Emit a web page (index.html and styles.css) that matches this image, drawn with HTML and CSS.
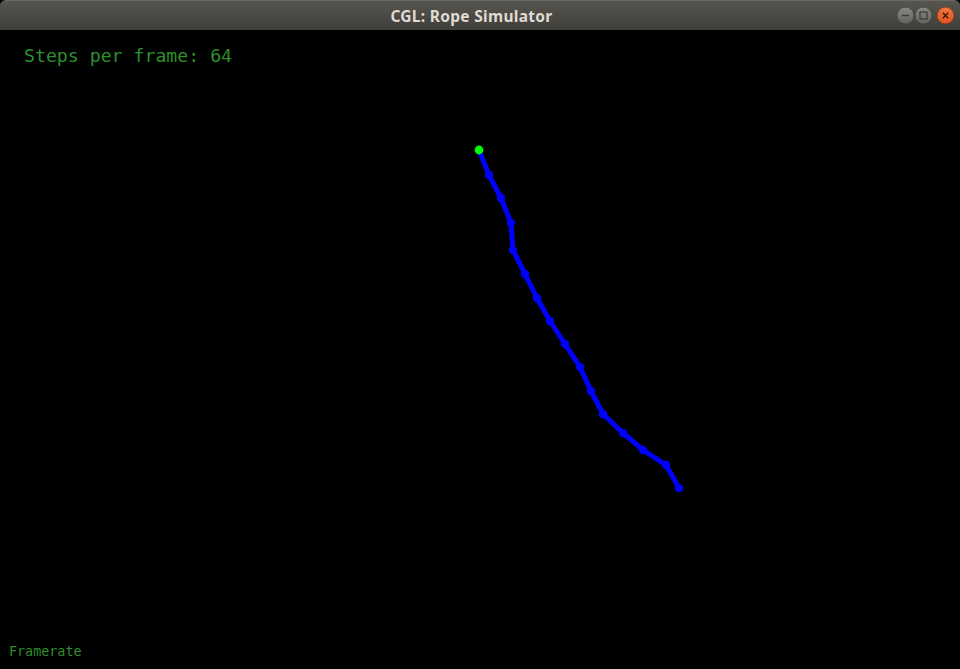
FILE: index.html
```html
<!DOCTYPE html>
<html>
<head>
<meta charset="utf-8">
<title>CGL: Rope Simulator</title>
<link rel="stylesheet" href="styles.css">
</head>
<body>
<div class="window">
  <div class="titlebar">
    <div class="title">CGL: Rope Simulator</div>
    <div class="controls">
      <span class="btn btn-min"><svg width="17" height="17" viewBox="0 0 17 17"><line x1="5" y1="8.5" x2="12" y2="8.5" stroke="#3a3935" stroke-width="1.4"/></svg></span>
      <span class="btn btn-max"><svg width="17" height="17" viewBox="0 0 17 17"><rect x="5" y="5" width="7" height="7" fill="none" stroke="#3a3935" stroke-width="1.2"/></svg></span>
      <span class="btn btn-close"><svg width="17" height="17" viewBox="0 0 17 17"><path d="M5.8 5.8 L11.2 11.2 M11.2 5.8 L5.8 11.2" stroke="#3b1a0c" stroke-width="1.4"/></svg></span>
    </div>
  </div>
  <div class="viewport">
    <svg class="scene" width="960" height="639" viewBox="0 30 960 639">
      <polyline fill="none" stroke="#0000ff" stroke-width="5" stroke-linejoin="round"
        points="479,150 489,175 501,198 511,223 513,250 525,274 537,298 550,321 565,344 580,367 591,391 603,414 623,433 643,450 666,465 679,488"/>
      <g fill="#0000ff">
        <circle cx="489" cy="175" r="4.2"/>
        <circle cx="501" cy="198" r="4.2"/>
        <circle cx="511" cy="223" r="4.2"/>
        <circle cx="513" cy="250" r="4.2"/>
        <circle cx="525" cy="274" r="4.2"/>
        <circle cx="537" cy="298" r="4.2"/>
        <circle cx="550" cy="321" r="4.2"/>
        <circle cx="565" cy="344" r="4.2"/>
        <circle cx="580" cy="367" r="4.2"/>
        <circle cx="591" cy="391" r="4.2"/>
        <circle cx="603" cy="414" r="4.2"/>
        <circle cx="623" cy="433" r="4.2"/>
        <circle cx="643" cy="450" r="4.2"/>
        <circle cx="666" cy="465" r="4.2"/>
        <circle cx="679" cy="488" r="4.2"/>
      </g>
      <circle cx="479" cy="150" r="4.4" fill="#00ff00"/>
    </svg>
    <div class="hud-top">Steps per frame: 64</div>
    <div class="hud-bottom">Framerate</div>
  </div>
</div>
</body>
</html>
```
FILE: styles.css
```css
html, body {
  margin: 0;
  padding: 0;
  background: #000;
}
.window {
  width: 960px;
  height: 669px;
  display: flex;
  flex-direction: column;
  overflow: hidden;
}
.titlebar {
  height: 30px;
  flex: 0 0 30px;
  box-sizing: border-box;
  border-top: 1px solid #6a6862;
  border-radius: 6px 6px 0 0;
  background: linear-gradient(#57554f, #3f3e3a);
  display: flex;
  align-items: center;
  justify-content: center;
  position: relative;
}
.title {
  font-family: "Noto Sans", "DejaVu Sans", sans-serif;
  font-weight: bold;
  font-size: 15.5px;
  color: #dfdbd2;
  letter-spacing: 0.3px;
  padding-right: 17px;
}
.controls {
  position: absolute;
  right: 6px;
  top: 6px;
  display: flex;
  gap: 1px;
}
.btn {
  width: 17px;
  height: 17px;
  border-radius: 50%;
  display: block;
  box-sizing: border-box;
}
.btn svg { display: block; }
.btn-min, .btn-max {
  background: linear-gradient(#8a8882, #64625d);
  box-shadow: inset 0 0 0 0.5px #3a3935;
}
.btn-close {
  margin-left: 4px;
  background: linear-gradient(#f5743f, #e0521f);
  box-shadow: inset 0 0 0 0.5px #7a2c0f;
}
.viewport {
  flex: 1;
  position: relative;
  background: #000;
  display: flex;
  flex-direction: column;
  justify-content: space-between;
}
.scene {
  position: absolute;
  left: 0;
  top: 0;
}
.hud-top {
  position: relative;
  font-family: "DejaVu Sans Mono", monospace;
  font-size: 18.2px;
  color: #2d8f2d;
  padding: 15px 0 0 24px;
  line-height: 22px;
}
.hud-bottom {
  position: relative;
  font-family: "DejaVu Sans Mono", monospace;
  font-size: 13.4px;
  color: #2d8f2d;
  padding: 0 0 9px 9px;
  line-height: 16px;
}
```
